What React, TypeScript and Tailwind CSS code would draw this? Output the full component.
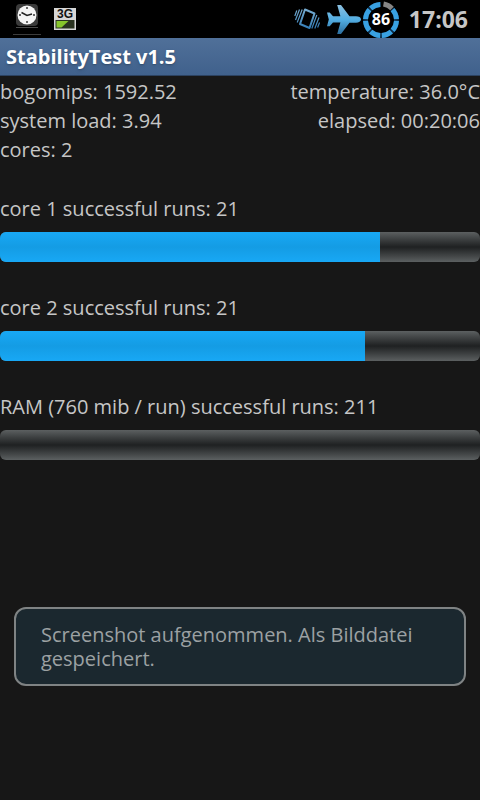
interface ProgressRowProps {
  id: string;
  label: string;
  value: number;
}

const runs: ProgressRowProps[] = [
  { id: "core1", label: "core 1 successful runs: 21", value: 79.2 },
  { id: "core2", label: "core 2 successful runs: 21", value: 76 },
  { id: "ram", label: "RAM (760 mib / run) successful runs: 211", value: 0 }
];

function ClockIcon() {
  return (
    <svg viewBox="0 0 32 36" aria-hidden="true" className="h-9 w-8">
      <rect x="5" y="3" width="22" height="22" rx="4" fill="#3a3a3a" />
      <circle cx="16" cy="14" r="9.5" fill="#f4f4f4" />
      <path d="M16 6v2M16 20v2M8 14h2M22 14h2" stroke="#333" strokeWidth="1.4" />
      <path d="M10.5 11.5 16 14.5l5-1.5" fill="none" stroke="#222" strokeWidth="1.5" />
      <path d="M5 26.5h22" stroke="#4a4a4a" strokeWidth="1" />
      <path d="M2 33.5h28" stroke="#3c3c3c" strokeWidth="1" />
    </svg>
  );
}

function NetworkIcon() {
  return (
    <svg viewBox="0 0 22 22" aria-hidden="true" className="h-[22px] w-[22px]">
      <rect width="22" height="22" fill="#d6d6d6" />
      <text
        x="11"
        y="10"
        textAnchor="middle"
        fontSize="12"
        className="font-['Liberation_Sans'] font-bold"
        fill="#111"
      >
        3G
      </text>
      <rect x="1.5" y="12" width="19" height="8.5" fill="#2a3320" />
      <path d="M2.5 13h12l-7 6.5h-5z" fill="#86c52b" />
    </svg>
  );
}

function VibrateIcon() {
  return (
    <svg viewBox="0 0 26 24" aria-hidden="true" className="h-6 w-[26px]">
      <defs>
        <linearGradient id="vibrate" x1="0" y1="0" x2="0" y2="24" gradientUnits="userSpaceOnUse">
          <stop offset="0" stopColor="#7fb2d4" />
          <stop offset="1" stopColor="#2a76b4" />
        </linearGradient>
      </defs>
      <g fill="none" stroke="url(#vibrate)">
        <path d="M11 2.5 20.5 6.5 15.5 21 6 17z" strokeWidth="2" strokeLinejoin="round" />
        <path
          d="M8.2 2.5 3.2 15.5M5.5 2.5 1.5 13M2.8 3.5.8 9M22.8 8 17.8 21.5M25 10.5 20.8 21.5M25.6 15.5l-2 5"
          strokeWidth="1.2"
        />
      </g>
    </svg>
  );
}

function AirplaneIcon() {
  return (
    <svg viewBox="0 0 36 32" aria-hidden="true" className="h-8 w-9">
      <defs>
        <linearGradient id="plane" x1="0" y1="0" x2="0" y2="1">
          <stop offset="0" stopColor="#8cc0e0" />
          <stop offset="0.5" stopColor="#53aee2" />
          <stop offset="1" stopColor="#2b6c9c" />
        </linearGradient>
      </defs>
      <path
        d="M35 16.5c0-2-2.2-3.2-5-3.2h-6.5L15 2h-3.8l3.2 11.3H7L3.7 9.5H1l1.8 7-1.8 6.8h2.7L7 19.6h7.4L11.2 31H15l8.5-11.3H30c2.8 0 5-1.2 5-3.2z"
        fill="url(#plane)"
      />
    </svg>
  );
}

function BatteryIcon() {
  return (
    <svg viewBox="0 0 38 38" role="img" aria-label="Battery 86 percent" className="h-[38px] w-[38px]">
      <g fill="none" strokeWidth="5" transform="rotate(-90 19 20)">
        <circle cx="19" cy="20" r="15.5" stroke="#0c2b45" />
        <circle
          cx="19"
          cy="20"
          r="15.5"
          stroke="#39a1e2"
          pathLength="80"
          strokeDasharray="8.6 1.4"
          strokeDashoffset="-0.7"
        />
      </g>
      <path d="M19 20V0h19v1z" fill="#000" />
      <path d="M21.5 4A16 16 0 0 1 30 8.5" fill="none" stroke="#858585" strokeWidth="5" />
      <text
        x="19"
        y="25"
        textAnchor="middle"
        fontSize="16"
        className="font-['Open_Sans'] font-bold"
        fill="#fff"
      >
        86
      </text>
    </svg>
  );
}

function ProgressRow({ id, label, value }: ProgressRowProps) {
  return (
    <div>
      <div id={id} className="leading-[29px]">
        {label}
      </div>
      <div
        role="progressbar"
        aria-labelledby={id}
        aria-valuenow={value}
        aria-valuemin={0}
        aria-valuemax={100}
        className="mt-[9px] h-[30px] overflow-hidden rounded-md bg-linear-to-b from-[#5c6061] via-[#1f2122] to-[#5c6061]"
      >
        <div
          className="h-full bg-linear-to-b from-[#18a8f5] via-[#149ce4] to-[#18a8f5]"
          style={{ width: `${value}%` }}
        />
      </div>
    </div>
  );
}

export default function App() {
  return (
    <div className="flex min-h-screen flex-col bg-[#171717] font-['Open_Sans',sans-serif] text-xl text-[#c6c6c6]">
      <header>
        <div className="flex h-[38px] items-center justify-between bg-black pr-3 pl-[11px]">
          <div className="flex items-center gap-[11px]">
            <ClockIcon />
            <NetworkIcon />
          </div>
          <div className="flex items-center">
            <VibrateIcon />
            <span className="ml-1.5">
              <AirplaneIcon />
            </span>
            <BatteryIcon />
            <time className="ml-[9px] text-[23px] font-bold">17:06</time>
          </div>
        </div>
        <h1 className="h-[38px] border-b border-[#2c4260] bg-linear-to-b from-[#507099] to-[#40618c] px-1.5 leading-[37px] font-bold text-white text-shadow-md">
          StabilityTest v1.5
        </h1>
      </header>

      <main className="pt-px">
        <div className="flex justify-between leading-[29px]">
          <div>
            <p>bogomips: 1592.52</p>
            <p>system load: 3.94</p>
            <p>cores: 2</p>
          </div>
          <div className="text-right">
            <p>temperature: 36.0°C</p>
            <p>elapsed: 00:20:06</p>
          </div>
        </div>
        <div className="mt-[30px] flex flex-col gap-[31px]">
          {runs.map((run) => (
            <ProgressRow key={run.id} {...run} />
          ))}
        </div>
      </main>

      <div
        role="status"
        className="mx-3.5 mt-auto mb-[114px] rounded-xl border-2 border-[#7f8384] bg-[#1b282f] px-[25px] pt-3.5 pb-[13px] leading-6 text-[#9ca1a3]"
      >
        Screenshot aufgenommen. Als Bilddatei gespeichert.
      </div>
    </div>
  );
}
